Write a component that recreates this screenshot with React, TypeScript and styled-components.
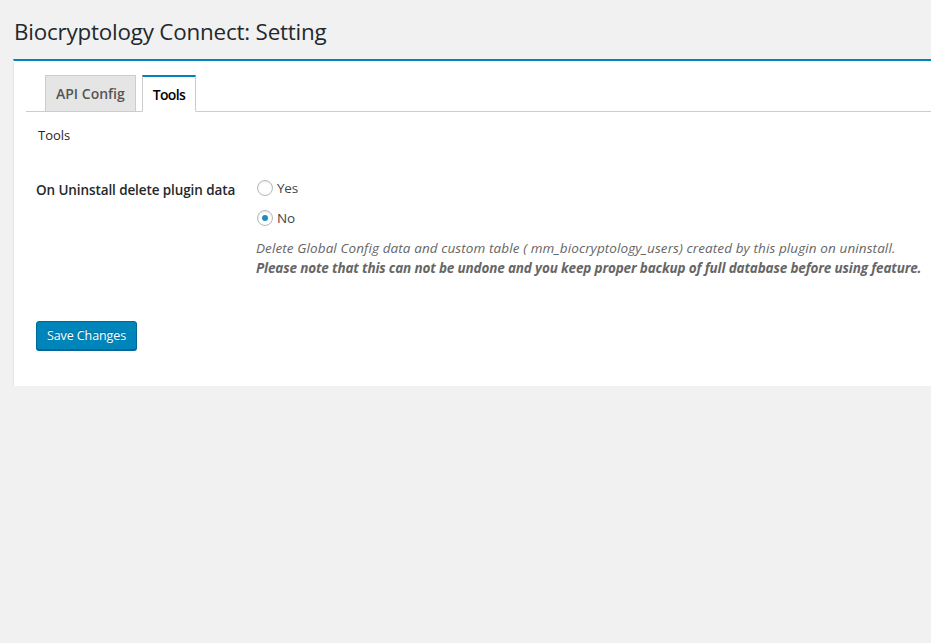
import React from "react";
import styled, { createGlobalStyle } from "styled-components";

const Global = createGlobalStyle`
  html, body { margin: 0; padding: 0; background: #f1f1f1; overflow: hidden; }
  body { font-family: "Open Sans", "Noto Sans", sans-serif; color: #23282d; font-size: 13px; }
`;

const Page = styled.div`
  padding: 0 0 0 13px;
  width: 1000px;
`;

const Title = styled.h1`
  margin: 0;
  padding: 17px 0 0 1px;
  height: 42px;
  font-size: 22.4px;
  font-weight: 400;
  line-height: 29px;
  color: #23282d;
  letter-spacing: -0.2px;
`;

const Card = styled.div`
  background: #fff;
  border-top: 2px solid #0085ba;
  border-left: 1px solid #e5e5e5;
  box-shadow: 0 1px 1px rgba(0, 0, 0, 0.04), 0 1px 0 #e5e5e5;
  padding: 14px 0 36px 12px;
`;

const TabBar = styled.div`
  display: flex;
  align-items: flex-end;
  gap: 6px;
  padding-left: 19px;
  border-bottom: 1px solid #ccc;
  height: 36px;
`;

const Tab = styled.div<{ $active?: boolean }>`
  box-sizing: border-box;
  height: ${(p) => (p.$active ? "37px" : "36px")};
  margin-bottom: ${(p) => (p.$active ? "-1px" : "0")};
  padding: 0 10px;
  display: flex;
  align-items: center;
  font-size: 14px;
  font-weight: 600;
  color: ${(p) => (p.$active ? "#000" : "#555")};
  background: ${(p) => (p.$active ? "#fff" : "#e5e5e5")};
  border: 1px solid #ccc;
  border-top: ${(p) => (p.$active ? "2px solid #0085ba" : "1px solid #ccc")};
  border-bottom: ${(p) => (p.$active ? "1px solid #fff" : "none")};
  letter-spacing: ${(p) => (p.$active ? "-0.7px" : "0")};
`;

const SectionTitle = styled.div`
  padding: 14px 0 0 12px;
  font-size: 13px;
  line-height: 18px;
  color: #23282d;
  height: 48px;
`;

const FormRow = styled.div`
  display: grid;
  grid-template-columns: 220px 1fr;
  padding-left: 10px;
`;

const Label = styled.div`
  font-size: 13.5px;
  font-weight: 600;
  padding-top: 6px;
  line-height: 20px;
  letter-spacing: -0.1px;
  color: #23282d;
`;

const Options = styled.div`
  display: flex;
  flex-direction: column;
  margin-top: -1px;
`;

const RadioRow = styled.label`
  display: flex;
  align-items: center;
  gap: 4px;
  height: 30px;
  font-size: 13.5px;
  color: #444;
  letter-spacing: -0.2px;
`;

const Radio = styled.span<{ $checked?: boolean }>`
  box-sizing: border-box;
  width: 16px;
  height: 16px;
  border-radius: 50%;
  border: 1px solid #b4b9be;
  box-shadow: inset 0 1px 2px rgba(0, 0, 0, 0.1);
  background: #fff;
  display: flex;
  align-items: center;
  justify-content: center;
  margin-left: 1px;
  &::after {
    content: "";
    display: ${(p) => (p.$checked ? "block" : "none")};
    width: 6px;
    height: 6px;
    border-radius: 50%;
    background: #1e8cbe;
  }
`;

const Description = styled.p`
  margin: 5px 0 0;
  font-size: 13.5px;
  font-style: italic;
  line-height: 20px;
  color: #666;
  letter-spacing: 0.1px;
  white-space: nowrap;
`;

const Strong = styled.b`
  font-weight: 700;
  letter-spacing: -0.15px;
`;

const Footer = styled.div`
  padding: 43px 0 0 10px;
`;

const Button = styled.button`
  box-sizing: border-box;
  height: 29px;
  padding: 0 10px;
  background: #0085ba;
  border: 1px solid #006799;
  border-radius: 3px;
  box-shadow: 0 1px 0 #006799;
  color: #fff;
  font-family: "Open Sans", "Noto Sans", sans-serif;
  font-size: 12.5px;
  letter-spacing: -0.1px;
  text-shadow: 0 -1px 1px #006799;
`;

export default function App() {
  return (
    <>
      <Global />
      <Page>
        <Title>Biocryptology Connect: Setting</Title>
        <Card>
          <TabBar>
            <Tab>API Config</Tab>
            <Tab $active>Tools</Tab>
          </TabBar>
          <SectionTitle>Tools</SectionTitle>
          <FormRow>
            <Label>On Uninstall delete plugin data</Label>
            <Options>
              <RadioRow>
                <Radio />
                Yes
              </RadioRow>
              <RadioRow>
                <Radio $checked />
                No
              </RadioRow>
              <Description>
                Delete Global Config data and custom table ( mm_biocryptology_users) created by this plugin on uninstall.
                <br />
                <Strong>Please note that this can not be undone and you keep proper backup of full database before using feature.</Strong>
              </Description>
            </Options>
          </FormRow>
          <Footer>
            <Button>Save Changes</Button>
          </Footer>
        </Card>
      </Page>
    </>
  );
}
